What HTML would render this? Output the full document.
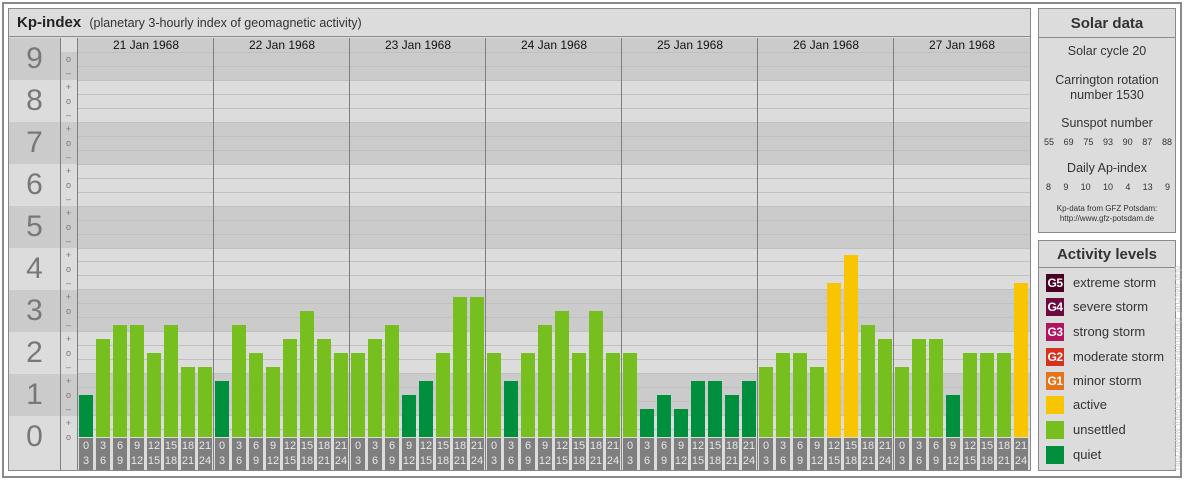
<!DOCTYPE html>
<html><head><meta charset="utf-8"><style>
*{margin:0;padding:0;box-sizing:border-box}
body{width:1184px;height:480px;background:#fff;position:relative;overflow:hidden;font-family:"Liberation Sans",Arial,sans-serif}
.a{position:absolute}
.outer{left:2px;top:2px;width:1180px;height:476px;border:2px solid #8a8a8a}
.panel{background:#dcdcdc;border:1px solid #8a8a8a}
.band{position:absolute;left:9px;width:1021px;height:42px;background:#cbcbcb}
.hl{position:absolute;left:78px;width:952px;height:1px;background:#c0c0c0}
.lab{position:absolute;left:9px;width:51px;height:42px;font-size:30px;color:#787878;text-align:center;line-height:42px}
.pm{position:absolute;left:60px;width:17px;font-size:9px;color:#777;text-align:center;height:14px;line-height:14px}
.day{position:absolute;top:38px;width:136px;height:432px;border-left:1px solid #7f7f7f}
.day .dt{position:absolute;left:0;top:0;width:136px;height:14px;font-size:12px;text-align:center;line-height:14px;color:#111}
.b{position:absolute;bottom:33px;width:14px}
.q{background:#008f3c}.u{background:#76bf1f}.y{background:#f9c400}
.h{position:absolute;top:400px;width:14px;height:32px;background:#7f7f7f;color:#e8e8e8;font-size:11px;text-align:center;line-height:15px;padding-top:1px}
.rt{text-align:center;color:#333}
.it{position:absolute;left:1046px;font-size:13px;color:#333;height:18px;line-height:18px}
.sw{display:inline-block;width:18px;height:18px;color:#fff;font-weight:bold;font-size:12px;text-align:center;line-height:18px;vertical-align:top;margin-right:9px;letter-spacing:-0.5px}
</style></head><body>
<div class="a outer"></div>
<!-- main panel -->
<div class="a panel" style="left:8px;top:8px;width:1023px;height:463px"></div>
<div class="a" style="left:9px;top:9px;width:1021px;height:28px;border-bottom:1px solid #8a8a8a;font-size:15px;line-height:28px;padding-left:8px;color:#222"><b>Kp-index</b> <span style="font-size:12.5px;color:#333;margin-left:4px">(planetary 3-hourly index of geomagnetic activity)</span></div>
<div class="band" style="top:38px"></div>
<div class="band" style="top:122px"></div>
<div class="band" style="top:206px"></div>
<div class="band" style="top:290px"></div>
<div class="band" style="top:374px"></div>
<div class="a" style="left:60px;top:38px;width:18px;height:14px;background:#dcdcdc"></div>
<div class="a" style="left:60px;top:38px;width:1px;height:432px;background:#7f7f7f"></div>
<div class="hl" style="top:52px"></div><div class="hl" style="top:66px"></div><div class="hl" style="top:80px"></div><div class="hl" style="top:94px"></div><div class="hl" style="top:108px"></div><div class="hl" style="top:122px"></div><div class="hl" style="top:136px"></div><div class="hl" style="top:150px"></div><div class="hl" style="top:164px"></div><div class="hl" style="top:178px"></div><div class="hl" style="top:192px"></div><div class="hl" style="top:206px"></div><div class="hl" style="top:220px"></div><div class="hl" style="top:234px"></div><div class="hl" style="top:248px"></div><div class="hl" style="top:261px"></div><div class="hl" style="top:275px"></div><div class="hl" style="top:289px"></div><div class="hl" style="top:303px"></div><div class="hl" style="top:317px"></div><div class="hl" style="top:331px"></div><div class="hl" style="top:345px"></div><div class="hl" style="top:359px"></div><div class="hl" style="top:373px"></div><div class="hl" style="top:387px"></div><div class="hl" style="top:401px"></div><div class="hl" style="top:415px"></div><div class="hl" style="top:429px"></div>
<div class="lab" style="top:38px">9</div><div class="lab" style="top:80px">8</div><div class="lab" style="top:122px">7</div><div class="lab" style="top:164px">6</div><div class="lab" style="top:206px">5</div><div class="lab" style="top:248px">4</div><div class="lab" style="top:290px">3</div><div class="lab" style="top:332px">2</div><div class="lab" style="top:374px">1</div><div class="lab" style="top:416px">0</div>
<div class="pm" style="top:52px">o</div><div class="pm" style="top:66px">–</div>
<div class="pm" style="top:80px">+</div><div class="pm" style="top:94px">o</div><div class="pm" style="top:108px">–</div>
<div class="pm" style="top:122px">+</div><div class="pm" style="top:136px">o</div><div class="pm" style="top:150px">–</div>
<div class="pm" style="top:164px">+</div><div class="pm" style="top:178px">o</div><div class="pm" style="top:192px">–</div>
<div class="pm" style="top:206px">+</div><div class="pm" style="top:220px">o</div><div class="pm" style="top:234px">–</div>
<div class="pm" style="top:248px">+</div><div class="pm" style="top:262px">o</div><div class="pm" style="top:276px">–</div>
<div class="pm" style="top:290px">+</div><div class="pm" style="top:304px">o</div><div class="pm" style="top:318px">–</div>
<div class="pm" style="top:332px">+</div><div class="pm" style="top:346px">o</div><div class="pm" style="top:360px">–</div>
<div class="pm" style="top:374px">+</div><div class="pm" style="top:388px">o</div><div class="pm" style="top:402px">–</div>
<div class="pm" style="top:416px">+</div><div class="pm" style="top:430px">o</div>

<div class="day" style="left:77px"><div class="dt">21 Jan 1968</div>
<div class="b q" style="left:1px;height:42px"></div><div class="b u" style="left:18px;height:98px"></div><div class="b u" style="left:35px;height:112px"></div><div class="b u" style="left:52px;height:112px"></div><div class="b u" style="left:69px;height:84px"></div><div class="b u" style="left:86px;height:112px"></div><div class="b u" style="left:103px;height:70px"></div><div class="b u" style="left:120px;height:70px"></div>
<div class="h" style="left:1px">0<br>3</div><div class="h" style="left:18px">3<br>6</div><div class="h" style="left:35px">6<br>9</div><div class="h" style="left:52px">9<br>12</div><div class="h" style="left:69px">12<br>15</div><div class="h" style="left:86px">15<br>18</div><div class="h" style="left:103px">18<br>21</div><div class="h" style="left:120px">21<br>24</div></div>

<div class="day" style="left:213px"><div class="dt">22 Jan 1968</div>
<div class="b q" style="left:1px;height:56px"></div><div class="b u" style="left:18px;height:112px"></div><div class="b u" style="left:35px;height:84px"></div><div class="b u" style="left:52px;height:70px"></div><div class="b u" style="left:69px;height:98px"></div><div class="b u" style="left:86px;height:126px"></div><div class="b u" style="left:103px;height:98px"></div><div class="b u" style="left:120px;height:84px"></div>
<div class="h" style="left:1px">0<br>3</div><div class="h" style="left:18px">3<br>6</div><div class="h" style="left:35px">6<br>9</div><div class="h" style="left:52px">9<br>12</div><div class="h" style="left:69px">12<br>15</div><div class="h" style="left:86px">15<br>18</div><div class="h" style="left:103px">18<br>21</div><div class="h" style="left:120px">21<br>24</div></div>

<div class="day" style="left:349px"><div class="dt">23 Jan 1968</div>
<div class="b u" style="left:1px;height:84px"></div><div class="b u" style="left:18px;height:98px"></div><div class="b u" style="left:35px;height:112px"></div><div class="b q" style="left:52px;height:42px"></div><div class="b q" style="left:69px;height:56px"></div><div class="b u" style="left:86px;height:84px"></div><div class="b u" style="left:103px;height:140px"></div><div class="b u" style="left:120px;height:140px"></div>
<div class="h" style="left:1px">0<br>3</div><div class="h" style="left:18px">3<br>6</div><div class="h" style="left:35px">6<br>9</div><div class="h" style="left:52px">9<br>12</div><div class="h" style="left:69px">12<br>15</div><div class="h" style="left:86px">15<br>18</div><div class="h" style="left:103px">18<br>21</div><div class="h" style="left:120px">21<br>24</div></div>

<div class="day" style="left:485px"><div class="dt">24 Jan 1968</div>
<div class="b u" style="left:1px;height:84px"></div><div class="b q" style="left:18px;height:56px"></div><div class="b u" style="left:35px;height:84px"></div><div class="b u" style="left:52px;height:112px"></div><div class="b u" style="left:69px;height:126px"></div><div class="b u" style="left:86px;height:84px"></div><div class="b u" style="left:103px;height:126px"></div><div class="b u" style="left:120px;height:84px"></div>
<div class="h" style="left:1px">0<br>3</div><div class="h" style="left:18px">3<br>6</div><div class="h" style="left:35px">6<br>9</div><div class="h" style="left:52px">9<br>12</div><div class="h" style="left:69px">12<br>15</div><div class="h" style="left:86px">15<br>18</div><div class="h" style="left:103px">18<br>21</div><div class="h" style="left:120px">21<br>24</div></div>

<div class="day" style="left:621px"><div class="dt">25 Jan 1968</div>
<div class="b u" style="left:1px;height:84px"></div><div class="b q" style="left:18px;height:28px"></div><div class="b q" style="left:35px;height:42px"></div><div class="b q" style="left:52px;height:28px"></div><div class="b q" style="left:69px;height:56px"></div><div class="b q" style="left:86px;height:56px"></div><div class="b q" style="left:103px;height:42px"></div><div class="b q" style="left:120px;height:56px"></div>
<div class="h" style="left:1px">0<br>3</div><div class="h" style="left:18px">3<br>6</div><div class="h" style="left:35px">6<br>9</div><div class="h" style="left:52px">9<br>12</div><div class="h" style="left:69px">12<br>15</div><div class="h" style="left:86px">15<br>18</div><div class="h" style="left:103px">18<br>21</div><div class="h" style="left:120px">21<br>24</div></div>

<div class="day" style="left:757px"><div class="dt">26 Jan 1968</div>
<div class="b u" style="left:1px;height:70px"></div><div class="b u" style="left:18px;height:84px"></div><div class="b u" style="left:35px;height:84px"></div><div class="b u" style="left:52px;height:70px"></div><div class="b y" style="left:69px;height:154px"></div><div class="b y" style="left:86px;height:182px"></div><div class="b u" style="left:103px;height:112px"></div><div class="b u" style="left:120px;height:98px"></div>
<div class="h" style="left:1px">0<br>3</div><div class="h" style="left:18px">3<br>6</div><div class="h" style="left:35px">6<br>9</div><div class="h" style="left:52px">9<br>12</div><div class="h" style="left:69px">12<br>15</div><div class="h" style="left:86px">15<br>18</div><div class="h" style="left:103px">18<br>21</div><div class="h" style="left:120px">21<br>24</div></div>

<div class="day" style="left:893px"><div class="dt">27 Jan 1968</div>
<div class="b u" style="left:1px;height:70px"></div><div class="b u" style="left:18px;height:98px"></div><div class="b u" style="left:35px;height:98px"></div><div class="b q" style="left:52px;height:42px"></div><div class="b u" style="left:69px;height:84px"></div><div class="b u" style="left:86px;height:84px"></div><div class="b u" style="left:103px;height:84px"></div><div class="b y" style="left:120px;height:154px"></div>
<div class="h" style="left:1px">0<br>3</div><div class="h" style="left:18px">3<br>6</div><div class="h" style="left:35px">6<br>9</div><div class="h" style="left:52px">9<br>12</div><div class="h" style="left:69px">12<br>15</div><div class="h" style="left:86px">15<br>18</div><div class="h" style="left:103px">18<br>21</div><div class="h" style="left:120px">21<br>24</div></div>

<!-- solar data -->
<div class="a panel" style="left:1038px;top:8px;width:138px;height:225px"></div>
<div class="a rt" style="left:1039px;top:9px;width:136px;height:29px;border-bottom:1px solid #8a8a8a;font-size:15px;font-weight:bold;line-height:30px;color:#333">Solar data</div>
<div class="a rt" style="left:1039px;top:44px;width:136px;font-size:12.5px">Solar cycle 20</div>
<div class="a rt" style="left:1039px;top:73px;width:136px;font-size:12.5px;line-height:15px">Carrington rotation<br>number 1530</div>
<div class="a rt" style="left:1039px;top:116px;width:136px;font-size:12.5px">Sunspot number</div>
<div class="a" style="left:1044px;top:137px;width:128px;font-size:9px;color:#333;display:flex;justify-content:space-between"><span>55</span><span>69</span><span>75</span><span>93</span><span>90</span><span>87</span><span>88</span></div>
<div class="a rt" style="left:1039px;top:161px;width:136px;font-size:12.5px">Daily Ap-index</div>
<div class="a" style="left:1046px;top:182px;width:124px;font-size:9px;color:#333;display:flex;justify-content:space-between"><span>8</span><span>9</span><span>10</span><span>10</span><span>4</span><span>13</span><span>9</span></div>
<div class="a rt" style="left:1039px;top:204px;width:136px;font-size:8px;line-height:10px">Kp-data from GFZ Potsdam:<br>http://www.gfz-potsdam.de</div>

<!-- activity -->
<div class="a panel" style="left:1038px;top:240px;width:138px;height:231px"></div>
<div class="a rt" style="left:1039px;top:241px;width:136px;height:27px;border-bottom:1px solid #8a8a8a;font-size:15px;font-weight:bold;line-height:28px;color:#333">Activity levels</div>
<div class="it" style="top:274px"><span class="sw" style="background:#4a0022">G5</span>extreme storm</div>
<div class="it" style="top:298px"><span class="sw" style="background:#6e0a3e">G4</span>severe storm</div>
<div class="it" style="top:323px"><span class="sw" style="background:#b0135f">G3</span>strong storm</div>
<div class="it" style="top:348px"><span class="sw" style="background:#d9301e">G2</span>moderate storm</div>
<div class="it" style="top:372px"><span class="sw" style="background:#e5731a">G1</span>minor storm</div>
<div class="it" style="top:396px"><span class="sw" style="background:#f9c400"></span>active</div>
<div class="it" style="top:421px"><span class="sw" style="background:#76bf1f"></span>unsettled</div>
<div class="it" style="top:446px"><span class="sw" style="background:#008f3c"></span>quiet</div>
<div class="a" style="left:1172px;top:470px;width:240px;height:12px;transform:rotate(-90deg);transform-origin:0 0;font-size:9px;color:#c8c8c8;white-space:nowrap">http://www.fheusner.eu/terra/aurora/kp_archive.php</div>
</body></html>
